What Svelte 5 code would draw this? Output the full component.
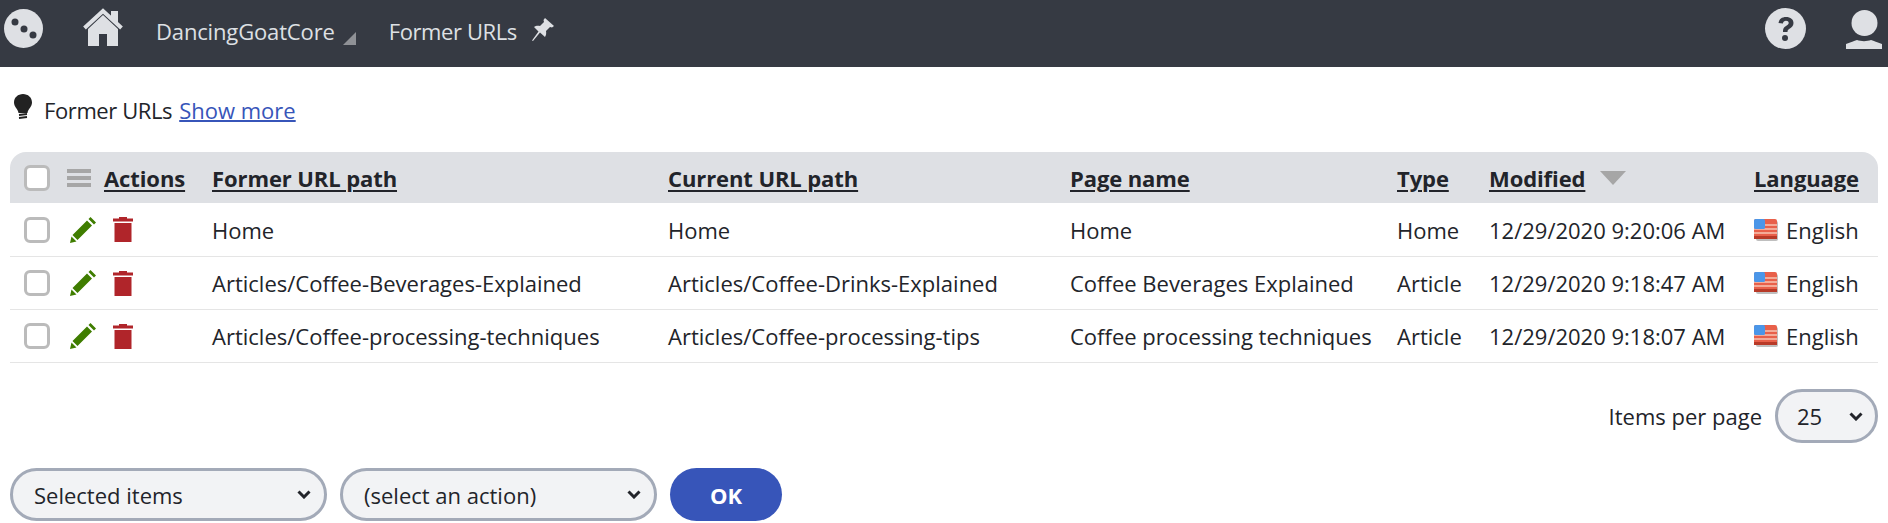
<script>
  const rows = [
    ['Home', 'Home', 'Home', 'Home', '12/29/2020 9:20:06 AM'],
    ['Articles/Coffee-Beverages-Explained', 'Articles/Coffee-Drinks-Explained', 'Coffee Beverages Explained', 'Article', '12/29/2020 9:18:47 AM'],
    ['Articles/Coffee-processing-techniques', 'Articles/Coffee-processing-tips', 'Coffee processing techniques', 'Article', '12/29/2020 9:18:07 AM']
  ];
</script>

<div class="page">
  <header class="topbar">
    <svg class="logo" viewBox="0 0 39 39"><circle cx="19.5" cy="19.5" r="19.5" fill="#dee0e4"/><circle cx="11" cy="13" r="3.5" fill="#363a43"/><circle cx="20" cy="20" r="3.5" fill="#363a43"/><circle cx="29" cy="26" r="3.5" fill="#363a43"/></svg>
    <svg class="home" viewBox="0 0 40 38"><path d="M28 3h7v12l-7-6z" fill="#dee0e4"/><path d="M20 7 5 21v17h11V26h8v12h11V21z" fill="#dee0e4"/><path d="M1.500 20 20 3l18.500 17" fill="none" stroke="#dee0e4" stroke-width="4"/></svg>
    <span class="crumb site">DancingGoatCore</span>
    <span class="tri"></span>
    <span class="crumb app">Former URLs</span>
    <svg class="pin" viewBox="0 0 22 23"><path d="M13 0l9 8-2 1.500-2-.5-4 4c.5 2.500 0 4.500-1 6L8 14.500 1 23l-1-.5 6.500-9L2 9c1.500-1 3.500-1.500 6-1l4-4-.5-2z" fill="#dee0e4"/></svg>
    <span class="spacer"></span>
    <svg class="help" viewBox="0 0 41 41"><circle cx="20.500" cy="20.500" r="20.500" fill="#dee0e4"/><path d="M13.500 15c.5-4 3.500-6 7.500-6 4.500 0 7.500 2.500 7.500 6 0 3-2 4.500-4 5.700-1.500.9-2 1.500-2 3.300h-4.500c-.2-3.300.8-4.800 3-6.100 1.700-1 2.700-1.700 2.700-2.900 0-1.300-1.100-2.200-2.700-2.200-1.700 0-2.800 1-3.100 2.800z" fill="#363a43"/><circle cx="20" cy="30" r="3" fill="#363a43"/></svg>
    <svg class="user" viewBox="0 0 36 39"><circle cx="18.500" cy="13" r="13" fill="#dee0e4"/><path d="M0 39v-5c5-2 8-3 11-4 4 1.500 10 1.500 14 0 3 1 6 2 11 4v5z" fill="#dee0e4"/></svg>
  </header>

  <div class="hint">
    <svg class="bulb" viewBox="0 0 18 26"><path d="M9 0C4 0 0 3.500 0 8.500c0 4.500 4 6.500 4.500 10.500h9C14 15 18 13 18 8.500 18 3.500 14 0 9 0z" fill="#222"/><path d="M5 21l8-1M5 24l8-1" stroke="#222" stroke-width="1.800"/></svg>
    <span class="tight">Former URLs</span>
    <a href="#more">Show more</a>
  </div>

  <table>
    <thead>
      <tr>
        <th class="c1">
          <div class="act">
            <span class="check"></span>
            <span class="bars"><i></i><i></i><i></i></span>
            <u class="actions">Actions</u>
          </div>
        </th>
        <th class="c2"><u>Former URL path</u></th>
        <th class="c3"><u>Current URL path</u></th>
        <th class="c4"><u>Page name</u></th>
        <th class="c5"><u>Type</u></th>
        <th class="c6"><u>Modified</u><span class="sort"></span></th>
        <th class="c7"><u>Language</u></th>
      </tr>
    </thead>
    <tbody>
      {#each rows as r}
        <tr>
          <td>
            <div class="act">
              <span class="check"></span>
              <svg class="pencil" viewBox="0 0 26 26"><path d="M20.500 0 26 5.500l-2 2L18.500 2zM17 3.500l5 5L7.500 23l-5-5zM1.500 19.500l5 5L0 26z" fill="#3f7d00"/></svg>
              <svg class="trash" viewBox="0 0 20 25"><path d="M6 0h8v1.500h6v3H0v-3h6zM1.500 6h17v19h-17z" fill="#b0252a"/></svg>
            </div>
          </td>
          {#each r as cell}
            <td>{cell}</td>
          {/each}
          <td>
            <div class="lang">
              <svg class="flag" viewBox="0 0 24 22">
                <rect x="2" y="2" width="22" height="20" rx="2" fill="#8a8a8a" opacity=".55"/>
                <rect width="23" height="20" rx="2" fill="#e8604a"/>
                <path d="M0 6h23M0 10h23M0 14h23" stroke="#f6c3b2" stroke-width="1.600"/>
                <rect y="17" width="23" height="3" fill="#b83a28"/>
                <rect width="11" height="10" rx="1.500" fill="#4b96e8"/>
              </svg>
              English
            </div>
          </td>
        </tr>
      {/each}
    </tbody>
  </table>

  <div class="pager">
    <span>Items per page</span>
    <select class="size"><option>25</option></select>
  </div>

  <div class="footer">
    <select class="wide"><option>Selected items</option></select>
    <select class="wide"><option>(select an action)</option></select>
    <button>OK</button>
  </div>
</div>

<style>
  :global(body) { margin: 0; background: #fff; }
  .page { font-family: "Open Sans", "Noto Sans", sans-serif; font-size: 22px; color: #22242a; }
  .topbar { display: flex; align-items: flex-start; height: 67px; background: #363a43; color: #dee0e4; }
  .logo { width: 39px; height: 39px; margin: 9px 0 0 4px; }
  .home { width: 40px; height: 38px; margin: 8px 0 0 40px; }
  .crumb { line-height: 30px; margin-top: 16px; }
  .site { margin-left: 33px; letter-spacing: -0.15px; }
  .tri { width: 0; height: 0; margin: 32px 0 0 8px; border-style: solid; border-width: 0 0 13px 13px; border-color: transparent transparent #8f9196 transparent; }
  .app { margin-left: 33px; letter-spacing: -0.4px; }
  .pin { width: 22px; height: 23px; margin: 18px 0 0 15px; }
  .spacer { flex: 1; }
  .help { width: 41px; height: 41px; margin-top: 8px; }
  .user { width: 36px; height: 39px; margin: 10px 6px 0 40px; }
  .hint { display: flex; align-items: center; height: 85px; padding-left: 14px; box-sizing: border-box; gap: 7px; }
  .tight { letter-spacing: -0.4px; }
  .bulb { width: 18px; height: 26px; margin: -6px 5px 0 0; }
  .hint a { color: #3755b9; text-decoration-thickness: 2px; }
  table { width: 1868px; margin-left: 10px; border-collapse: separate; border-spacing: 0; table-layout: fixed; }
  th, td { text-align: left; padding: 0; white-space: nowrap; }
  th { height: 51px; background: #dee0e4; font-weight: 700; letter-spacing: -0.1px; }
  th u, .actions { text-decoration-thickness: 2px; text-underline-offset: 3px; }
  th:first-child { border-top-left-radius: 16px; }
  th:last-child { border-top-right-radius: 16px; }
  td { height: 52px; border-bottom: 1px solid #e5e5e5; }
  tbody tr:first-child td { height: 53px; }
  .c1 { width: 202px; }
  .c2 { width: 456px; }
  .c3 { width: 402px; }
  .c4 { width: 327px; }
  .c5 { width: 92px; }
  .c6 { width: 265px; }
  .c7 { width: 124px; }
  .act { display: flex; align-items: center; padding-left: 14px; }
  .check { box-sizing: border-box; width: 26px; height: 26px; border: 3px solid #bbb; border-radius: 6px; background: #fff; }
  .bars { display: flex; flex-direction: column; gap: 3px; margin-left: 17px; width: 24px; }
  .bars i { display: block; height: 4px; background: #a6a6a6; }
  .actions { margin-left: 13px; }
  .pencil { width: 26px; height: 26px; margin-left: 20px; }
  .trash { width: 20px; height: 25px; margin-left: 17px; }
  .sort { display: inline-block; width: 0; height: 0; margin-left: 15px; vertical-align: 2px; border-style: solid; border-width: 14px 13px 0 13px; border-color: #a6a6a6 transparent transparent transparent; }
  .lang { display: flex; align-items: center; gap: 8px; }
  .flag { width: 24px; height: 22px; }
  select { appearance: none; box-sizing: border-box; font: inherit; color: inherit; background-color: #f2f3f5; background-image: url("data:image/svg+xml,%3Csvg xmlns='http://www.w3.org/2000/svg' width='14' height='9'%3E%3Cpath d='M1.500 1.500 7 7l5.500-5.500' fill='none' stroke='%2322242a' stroke-width='3'/%3E%3C/svg%3E"); background-repeat: no-repeat; border: 3px solid #a3aab8; border-radius: 27px; }
  .pager { display: flex; justify-content: flex-end; align-items: center; gap: 13px; margin: 26px 10px 0 0; }
  .size { width: 103px; height: 54px; padding-left: 19px; background-position: right 12px center; }
  .footer { display: flex; gap: 13px; margin: 25px 0 0 10px; }
  .wide { width: 317px; height: 53px; padding-left: 21px; background-position: right 13px center; }
  button { width: 112px; height: 53px; border: 0; border-radius: 27px; background: #3755b9; color: #fff; font: 700 22px "Open Sans", sans-serif; }
</style>
